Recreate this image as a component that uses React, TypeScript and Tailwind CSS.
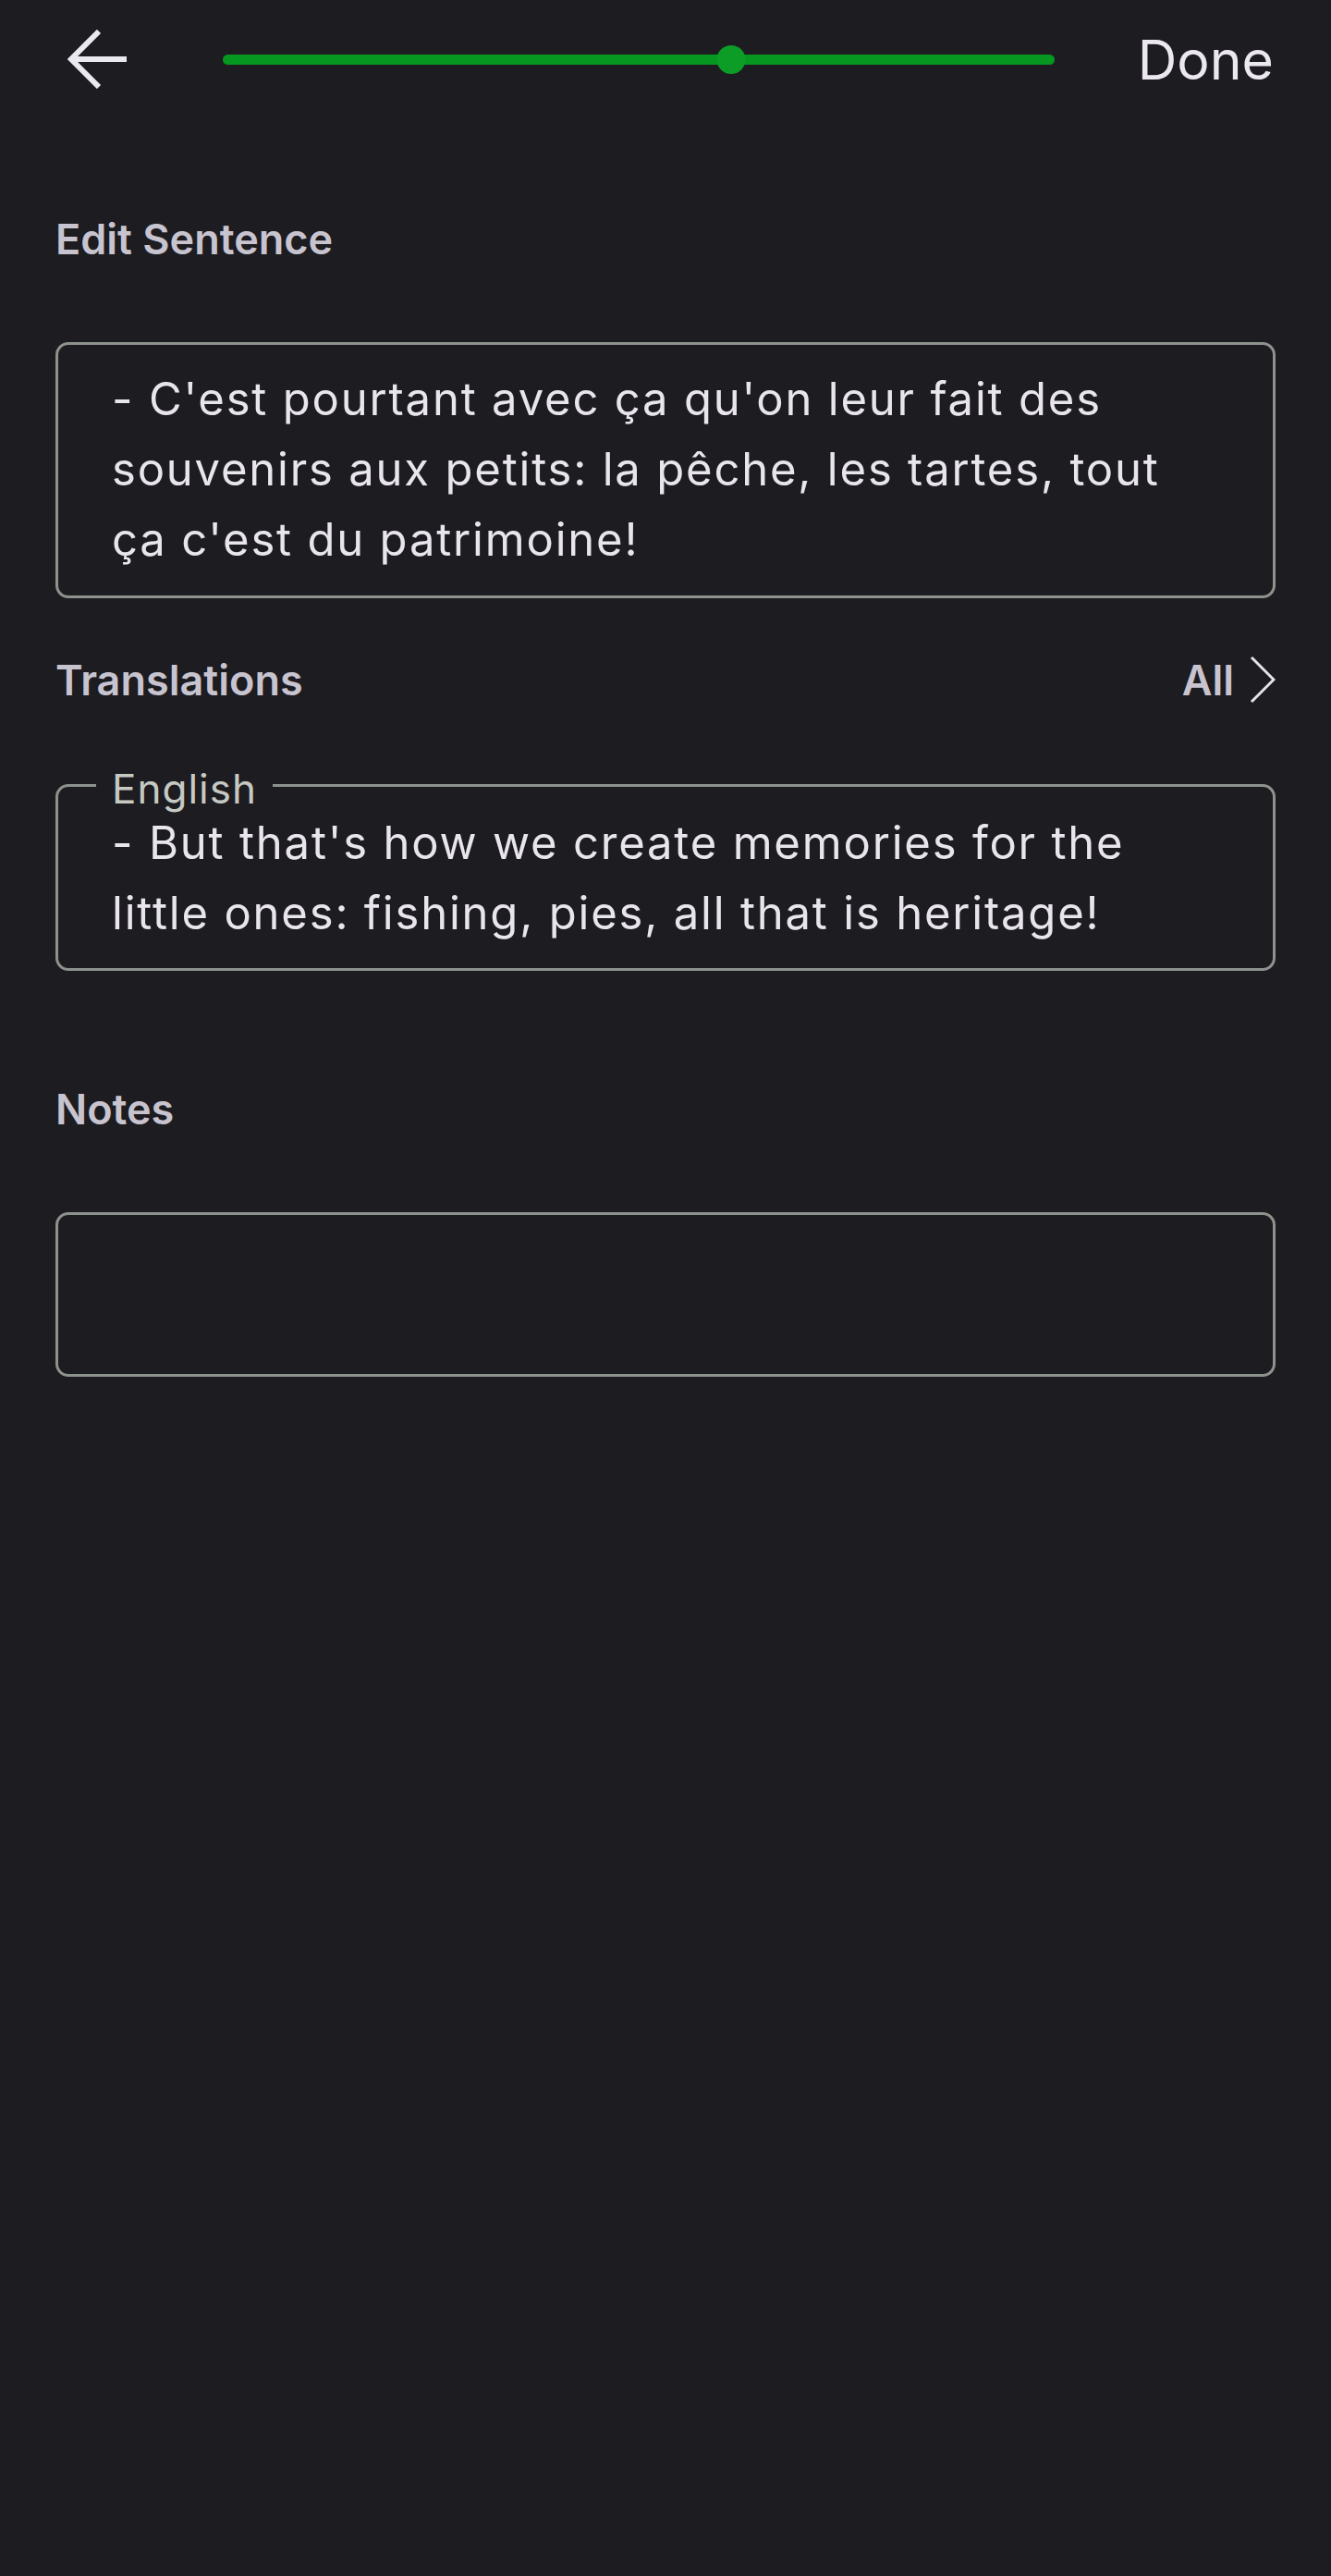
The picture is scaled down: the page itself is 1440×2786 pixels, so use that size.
import React from "react";

function BackArrow() {
  return (
    <svg width="64" height="64" viewBox="0 0 64 64" fill="none" className="shrink-0">
      <path d="M64 32H4" stroke="#ebe9f0" strokeWidth="6" />
      <path d="M34 2L4 32l30 30" stroke="#ebe9f0" strokeWidth="6" strokeLinejoin="miter" />
    </svg>
  );
}

function Chevron() {
  return (
    <svg width="28" height="52" viewBox="0 0 28 52" fill="none">
      <path d="M2 2l24 24L2 50" stroke="#e6e3ea" strokeWidth="3" />
    </svg>
  );
}

function Progress({ value }: { value: number }) {
  return (
    <div className="relative ml-[104px] h-[31px] w-[900px] flex items-center">
      <div className="h-[11px] w-full rounded-full bg-[#05971f]" />
      <div
        className="absolute top-0 h-[31px] w-[31px] -translate-x-1/2 rounded-full bg-[#0b9d26]"
        style={{ left: `${value * 100}%` }}
      />
    </div>
  );
}

function Label({ children }: { children: React.ReactNode }) {
  return (
    <div className="text-[45px] leading-[45px] font-semibold text-[#c8c4cf]">{children}</div>
  );
}

function Lines({ lines }: { lines: string[] }) {
  return (
    <>
      {lines.map((l) => (
        <span key={l} className="block whitespace-nowrap">
          {l}
        </span>
      ))}
    </>
  );
}

export default function App() {
  return (
    <div
      className="min-h-[2786px] w-[1440px] bg-[#1d1c21] text-[#e8e5ec]"
      style={{ fontFamily: "Inter, 'Noto Sans', sans-serif" }}
    >
      <header className="flex h-[128px] items-center pl-[73px] pr-[62px]">
        <BackArrow />
        <Progress value={0.611} />
        <span className="ml-auto text-[59px] leading-none text-[#ebe8ef]">Done</span>
      </header>

      <main className="px-[60px]">
        <div className="mt-[108px]">
          <Label>Edit Sentence</Label>
        </div>

        <div className="mt-[89px] rounded-[14px] border-[3px] border-[#8e928d] pl-[58px] pr-[60px] pt-[21px] pb-[22px] text-[49px] leading-[76px] tracking-[1.8px]">
          <Lines
            lines={[
              "- C'est pourtant avec ça qu'on leur fait des",
              "souvenirs aux petits: la pêche, les tartes, tout",
              "ça c'est du patrimoine!",
            ]}
          />
        </div>

        <div className="mt-[62px] flex items-center justify-between">
          <Label>Translations</Label>
          <div className="flex items-center gap-[17px]">
            <Label>All</Label>
            <Chevron />
          </div>
        </div>

        <div className="relative mt-[87px] rounded-[14px] border-[3px] border-[#8e928d] pl-[58px] pr-[60px] pt-[23px] pb-[21px] text-[49px] leading-[76px] tracking-[1.8px]">
          <span className="absolute left-[41px] top-[-20px] bg-[#1d1c21] px-[17px] text-[44px] leading-[44px] tracking-[1px] text-[#c6c9c2]">
            English
          </span>
          <Lines
            lines={[
              "- But that's how we create memories for the",
              "little ones: fishing, pies, all that is heritage!",
            ]}
          />
        </div>

        <div className="mt-[127px]">
          <Label>Notes</Label>
        </div>

        <div className="mt-[89px] h-[178px] rounded-[14px] border-[3px] border-[#8e928d]" />
      </main>
    </div>
  );
}
